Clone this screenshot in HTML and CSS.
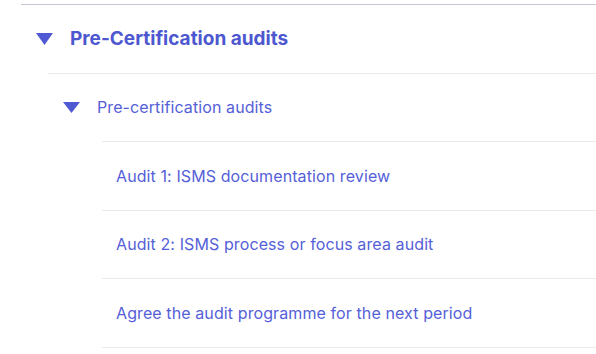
FILE: index.html
```html
<!DOCTYPE html>
<html>
<head>
  <meta charset="utf-8" />
  <title>Pre-Certification audits</title>
  <link rel="stylesheet" href="styles.css">
</head>
<body>
<div class="tree">
  <div class="section">
    <div class="row row-top">
      <svg class="caret caret-lg" viewBox="0 0 17 12"><path d="M0 0H17L8.5 12Z"/></svg>
      <span class="label-top">Pre-Certification audits</span>
    </div>
    <div class="group">
      <div class="row row-sub">
        <svg class="caret" viewBox="0 0 17 11"><path d="M0 0H17L8.5 11Z"/></svg>
        <span class="label-sub">Pre-certification audits</span>
      </div>
      <ul class="items">
        <li class="item"><a href="#">Audit 1: ISMS documentation review</a></li>
        <li class="item"><a href="#">Audit 2: ISMS process or focus area audit</a></li>
        <li class="item"><a href="#">Agree the audit programme for the next period</a></li>
      </ul>
    </div>
  </div>
</div>
</body>
</html>
```

FILE: styles.css
```css
body {
  margin: 0;
  padding: 0;
  background: #ffffff;
  font-family: "Inter", "Liberation Sans", sans-serif;
}
.tree {
  padding: 4px 0 0 21px;
}
.section {
  border-top: 1px solid #c8c6d1;
}
.row {
  display: flex;
  align-items: center;
  height: 67.5px;
}
.row-top {
  padding-left: 15px;
}
.row-sub {
  padding-left: 15px;
}
.caret {
  width: 17px;
  height: 11px;
  fill: #4f59d3;
  flex-shrink: 0;
}
.caret-lg {
  height: 12px;
}
.label-top {
  margin-left: 17px;
  font-size: 19px;
  font-weight: 700;
  color: #4c57d0;
}
.label-sub {
  margin-left: 17px;
  font-size: 16px;
  letter-spacing: 0.1px;
  color: #5560d8;
}
.group {
  margin-left: 27px;
  border-top: 1px solid #ebebeb;
}
.items {
  list-style: none;
  margin: 0 0 0 54px;
  padding: 0;
}
.item {
  border-top: 1px solid #ebebeb;
  height: 67.5px;
  display: flex;
  align-items: center;
  padding-left: 14px;
}
.item:last-child {
  border-bottom: 1px solid #ebebeb;
}
.item a {
  font-size: 16px;
  letter-spacing: 0.1px;
  color: #5560d8;
  text-decoration: none;
}
```
